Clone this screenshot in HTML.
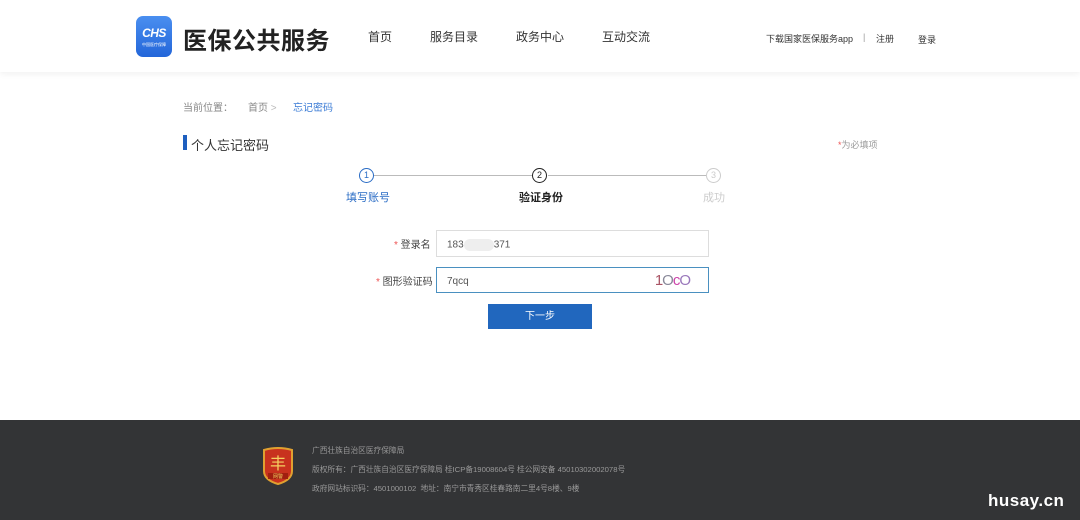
<!DOCTYPE html>
<html><head><meta charset="utf-8">
<style>
*{margin:0;padding:0;box-sizing:border-box}
body{width:1080px;height:520px;background:#fff;font-family:"Liberation Sans","Noto Sans CJK SC",sans-serif;position:relative;overflow:hidden;color:#333}
.hdr{position:absolute;left:0;top:0;width:1080px;height:72px;background:#fff;box-shadow:0 2px 6px rgba(0,0,0,.06)}
.logo{position:absolute;left:136px;top:16px;width:36px;height:41px;border-radius:7px;background:linear-gradient(#4a8ff0,#2366d9);color:#fff;text-align:center}
.logo b{display:block;font-size:12px;font-style:italic;margin-top:10px;letter-spacing:-.5px}
.logo i{display:block;font-size:4px;font-style:normal;margin-top:2px}
.title{position:absolute;left:183px;top:21px;font-size:24px;font-weight:bold;color:#222;letter-spacing:.5px}
.nav{position:absolute;top:28px;font-size:12px;color:#333}
.sm{position:absolute;top:32px;font-size:9px;color:#333}
.abs{position:absolute}
.foot{position:absolute;left:0;top:420px;width:1080px;height:100px;background:#333436}
.ft{position:absolute;left:312px;font-size:7.7px;color:#999}
.box{position:absolute;left:436px;width:273px;height:26px;border:1px solid #ddd;font-size:10px;color:#555;padding:8px 10px;background:#fff}
.lbl{position:absolute;font-size:10px;color:#444}
.lbl span{color:#e55}
.circ{position:absolute;width:15px;height:15px;border-radius:50%;border:1.5px solid;font-size:9px;text-align:center;line-height:12px;background:#fff}
</style></head><body>
<div class="hdr">
 <div class="logo"><b>CHS</b><i>中国医疗保障</i></div>
 <div class="title">医保公共服务</div>
 <div class="nav" style="left:368px">首页</div>
 <div class="nav" style="left:430px">服务目录</div>
 <div class="nav" style="left:516px">政务中心</div>
 <div class="nav" style="left:602px">互动交流</div>
 <div class="sm" style="left:766px">下载国家医保服务app</div>
 <div class="sm" style="left:863px;color:#999">|</div>
 <div class="sm" style="left:876px">注册</div>
 <div class="sm" style="left:918px;top:33px">登录</div>
</div>
<div class="abs" style="left:183px;top:99px;font-size:10px;color:#888">当前位置：</div>
<div class="abs" style="left:248px;top:99px;font-size:10px;color:#888">首页 <span style="color:#bbb">&gt;</span></div>
<div class="abs" style="left:293px;top:99px;font-size:10px;color:#3a7bd5">忘记密码</div>
<div class="abs" style="left:183px;top:135px;width:4px;height:15px;background:#1e5fbf"></div>
<div class="abs" style="left:191px;top:135px;font-size:13px;color:#333">个人忘记密码</div>
<div class="abs" style="left:838px;top:138px;font-size:9px;color:#999"><span style="color:#e55">*</span>为必填项</div>
<div class="abs" style="left:374px;top:175px;width:160px;height:1px;background:#bbb"></div>
<div class="abs" style="left:548px;top:175px;width:158px;height:1px;background:#bbb"></div>
<div class="circ" style="left:359px;top:168px;border-color:#2a6cc5;color:#2a6cc5">1</div>
<div class="circ" style="left:532px;top:168px;border-color:#222;color:#222">2</div>
<div class="circ" style="left:706px;top:168px;border-color:#ccc;color:#ccc">3</div>
<div class="abs" style="left:346px;top:189px;font-size:11px;color:#2a6cc5">填写账号</div>
<div class="abs" style="left:519px;top:189px;font-size:11px;color:#222;font-weight:bold">验证身份</div>
<div class="abs" style="left:703px;top:189px;font-size:11px;color:#ccc">成功</div>
<div class="lbl" style="left:394px;top:236px"><span>*</span> 登录名</div>
<div class="box" style="top:230px;height:27px">183<span style="display:inline-block;width:30px;height:12px;background:#eee;vertical-align:middle;border-radius:6px"></span>371</div>
<div class="lbl" style="left:376px;top:273px"><span>*</span> 图形验证码</div>
<div class="box" style="top:267px;border-color:#4a90c0">7qcq<span style="position:absolute;right:18px;top:4px;font-size:15px;color:#a56;letter-spacing:-1px">1<span style="color:#889">O</span><span style="color:#c4a">c</span><span style="color:#97b">O</span></span></div>
<div class="abs" style="left:488px;top:304px;width:104px;height:25px;background:#2167be;color:#fff;font-size:10px;text-align:center;line-height:25px">下一步</div>
<div class="foot">
 <svg style="position:absolute;left:262px;top:27px" width="32" height="38" viewBox="0 0 32 38"><path d="M2 3 Q16 -1 30 3 L30 24 Q30 33 16 37 Q2 33 2 24Z" fill="#c8321e" stroke="#e0a030" stroke-width="2"/><text x="16" y="22" font-size="16" fill="#f4d060" text-anchor="middle" font-family="Noto Sans CJK SC">丰</text><rect x="6" y="26" width="20" height="6" fill="#a02010"/><text x="16" y="31" font-size="5" fill="#f4d060" text-anchor="middle" font-family="Noto Sans CJK SC">网警</text></svg>
 <div class="ft" style="top:25px">广西壮族自治区医疗保障局</div>
 <div class="ft" style="top:44px">版权所有：广西壮族自治区医疗保障局 桂ICP备19008604号 桂公网安备 45010302002078号</div>
 <div class="ft" style="top:63px">政府网站标识码：4501000102 &nbsp;地址：南宁市青秀区桂春路南二里4号8楼、9楼</div>
 <div style="position:absolute;left:988px;top:71px;font-size:17px;font-weight:bold;color:#fff;letter-spacing:.5px">husay.cn</div>
</div>
</body></html>
